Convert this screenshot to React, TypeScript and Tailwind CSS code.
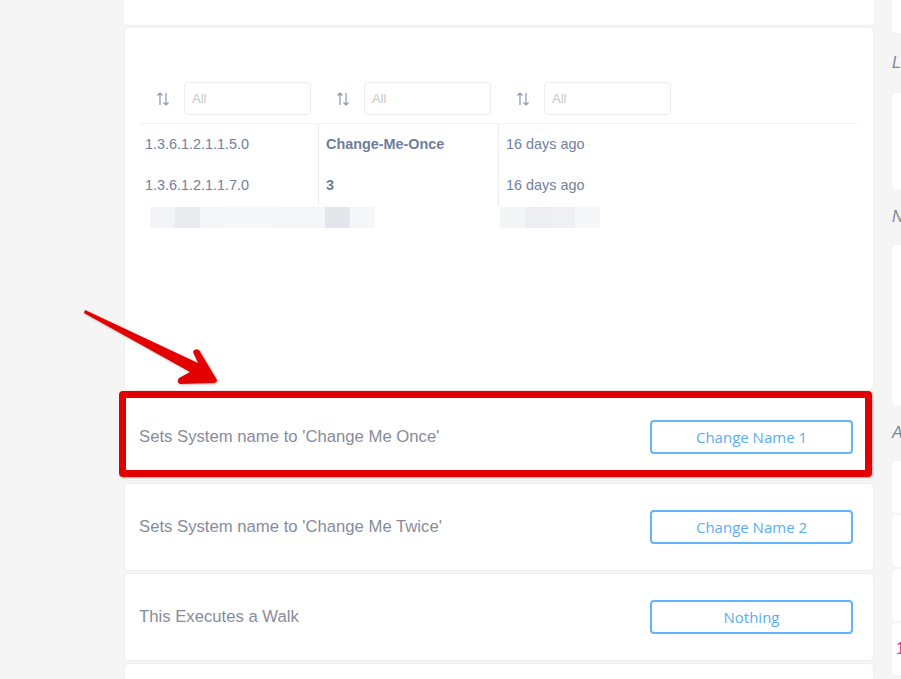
import React from "react";

const SortIcon = () => (
  <svg width="16" height="16" viewBox="0 0 16 16" fill="none" stroke="#8d96aa" strokeWidth="1.2">
    <path d="M5 14V2M2.5 4.5L5 2l2.5 2.5" />
    <path d="M11 2v12M8.5 11.5L11 14l2.5-2.5" />
  </svg>
);

const rows = [
  { oid: "1.3.6.1.2.1.1.5.0", value: "Change-Me-Once", age: "16 days ago" },
  { oid: "1.3.6.1.2.1.1.7.0", value: "3", age: "16 days ago" },
];

const actions = [
  { text: "Sets System name to 'Change Me Once'", button: "Change Name 1" },
  { text: "Sets System name to 'Change Me Twice'", button: "Change Name 2" },
  { text: "This Executes a Walk", button: "Nothing" },
];

const HeaderCell = () => (
  <div className="w-[180px] h-[47px] flex items-start pt-[6px]">
    <div className="w-[45px] pl-[16px] pt-[9px]">
      <SortIcon />
    </div>
    <div className="w-[127px] h-[33px] border border-[#ececec] rounded-[4px] flex items-center pl-[7px] text-[13px] text-[#c8c8c8]">
      All
    </div>
  </div>
);

export default function App() {
  return (
    <div
      className="relative w-[901px] h-[679px] overflow-hidden bg-[#f5f5f5] flex items-start"
      style={{ fontFamily: '"Liberation Sans", Arial, sans-serif' }}
    >
      <div className="w-[124px] shrink-0" />

      {/* main column */}
      <div className="w-[750px] shrink-0 flex flex-col">
        <div className="h-[26px] shrink-0 bg-white rounded-b-[5px] border-b border-[#efefef]" />
        <div className="mt-[1px] h-[364px] shrink-0 bg-white rounded-[5px] border border-[#efefef] pl-[14px] pr-[15px] pt-[48px]">
          <div className="flex w-[540px] bg-white">
            <HeaderCell />
            <HeaderCell />
            <HeaderCell />
          </div>
          <div className="h-[1px] w-full shadow-[0_3px_8px_rgba(0,0,0,0.07)] bg-[#f3f3f3]" />
          <div className="w-[540px] text-[14.4px] text-[#72809d]">
            {rows.map((r) => (
              <div key={r.oid} className="flex h-[41px]">
                <div className="w-[179px] pl-[6px] pt-[10px]">{r.oid}</div>
                <div className="w-[180px] border-l border-[#eceef1] pl-[7px] pt-[10px] font-bold text-[#6e7d9b]">
                  {r.value}
                </div>
                <div className="w-[181px] border-l border-[#eceef1] pl-[7px] pt-[10px]">{r.age}</div>
              </div>
            ))}
            <div className="flex h-[21px] mt-[1px]">
              <div className="w-[11px]" />
              <div className="flex">
                <div className="w-[25px] bg-[#f3f4f7]" />
                <div className="w-[25px] bg-[#e8eaee]" />
                <div className="w-[25px] bg-[#f5f6f8]" />
                <div className="w-[25px] bg-[#f6f7f9]" />
                <div className="w-[25px] bg-[#f6f7f9]" />
                <div className="w-[25px] bg-[#f5f6f8]" />
                <div className="w-[25px] bg-[#f5f6f8]" />
                <div className="w-[25px] bg-[#e4e6eb]" />
                <div className="w-[25px] bg-[#f5f6f8]" />
              </div>
              <div className="w-[125px]" />
              <div className="flex">
                <div className="w-[25px] bg-[#f4f5f7]" />
                <div className="w-[25px] bg-[#eceef1]" />
                <div className="w-[25px] bg-[#eef0f3]" />
                <div className="w-[25px] bg-[#f6f7f9]" />
              </div>
            </div>
          </div>
        </div>

        {actions.map((a) => (
          <div
            key={a.button}
            className="mt-[2px] h-[88px] shrink-0 bg-white rounded-[5px] border border-[#efefef] flex items-center justify-between pl-[14px] pr-[20px]"
          >
            <span className="text-[16.7px] text-[#878c9b]">{a.text}</span>
            <button
              className="w-[203px] h-[34px] border-2 border-[#62b5f8] rounded-[4px] text-[15px] text-[#5aaef5]"
              style={{ fontFamily: '"Open Sans", sans-serif' }}
            >
              {a.button}
            </button>
          </div>
        ))}
        <div className="mt-[2px] h-[40px] shrink-0 bg-white rounded-[5px] border border-[#efefef]" />
      </div>

      {/* right sidebar */}
      <div className="ml-[18px] w-[200px] shrink-0 flex flex-col text-[#7a859b]">
        <div className="h-[33px] shrink-0 bg-white rounded-b-[5px]" />
        <div className="h-[60px] shrink-0 flex items-center text-[16px] italic">L</div>
        <div className="h-[96px] shrink-0 bg-white rounded-[5px]" />
        <div className="h-[56px] shrink-0 flex items-center text-[16px] italic">N</div>
        <div className="h-[160px] shrink-0 bg-white rounded-[5px]" />
        <div className="h-[56px] shrink-0 flex items-center text-[16px] italic">A</div>
        <div className="h-[52px] shrink-0 bg-white rounded-[5px]" />
        <div className="mt-[2px] h-[52px] shrink-0 bg-white rounded-[5px]" />
        <div className="mt-[2px] h-[52px] shrink-0 bg-white rounded-[5px]" />
        <div className="mt-[2px] h-[52px] shrink-0 bg-white rounded-[5px] flex items-center pl-[4px] text-[16px] text-[#e0418c]">
          1
        </div>
      </div>

      {/* annotation overlay */}
      <div className="absolute left-[119px] top-[391px] w-[753px] h-[86px] border-[7px] border-[#e30000] rounded-[4px] shadow-[1px_1px_2px_rgba(0,0,0,0.3)] pointer-events-none" />
      <svg className="absolute left-[80px] top-[305px]" width="150" height="85" viewBox="0 0 150 85">
        <defs>
          <filter id="sh" x="-10%" y="-10%" width="130%" height="130%">
            <feDropShadow dx="1" dy="1" stdDeviation="1" floodColor="#000" floodOpacity="0.3" />
          </filter>
        </defs>
        <path
          d="M5 5 L118 58 L113 47 Q114 43 119 45 L137 75 Q137 78 133 78 L100 79 Q96 77 99 73 L110 67 L4 8 Z"
          fill="#e30000"
          filter="url(#sh)"
        />
      </svg>
    </div>
  );
}
